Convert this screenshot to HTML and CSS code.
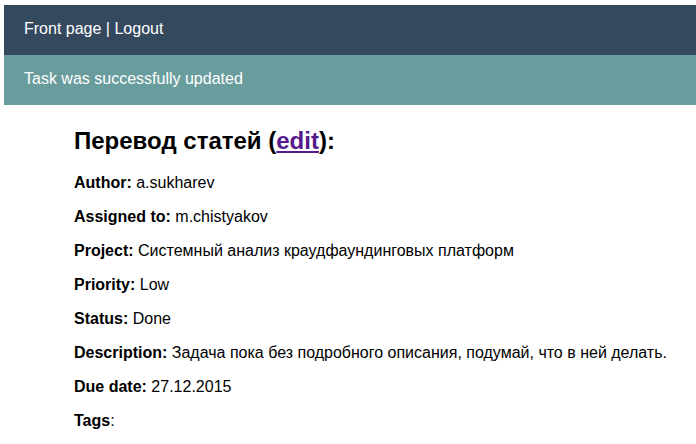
FILE: index.html
```html
<!DOCTYPE html>
<html>
<head>
<meta charset="utf-8">
<link rel="stylesheet" href="styles.css">
</head>
<body>
<div class="page">
  <div class="topbar"><a class="nav" href="#">Front page</a> | <a class="nav" href="#">Logout</a></div>
  <div class="flash">Task was successfully updated</div>
  <div class="content">
    <h2 class="title">Перевод статей (<a class="edit" href="#">edit</a>):</h2>
    <p class="row"><b>Author:</b> a.sukharev</p>
    <p class="row"><b>Assigned to:</b> m.chistyakov</p>
    <p class="row"><b>Project:</b> Системный анализ краудфаундинговых платформ</p>
    <p class="row"><b>Priority:</b> Low</p>
    <p class="row"><b>Status:</b> Done</p>
    <p class="row"><b>Description:</b> Задача пока без подробного описания, подумай, что в ней делать.</p>
    <p class="row"><b>Due date:</b> 27.12.2015</p>
    <p class="row"><b>Tags</b>:</p>
  </div>
</div>
</body>
</html>
```
FILE: styles.css
```css
html, body {
  margin: 0;
  padding: 0;
  background: #fff;
}
body {
  font-family: "Liberation Sans", Arial, sans-serif;
  color: #000;
}
.page {
  padding: 5px 0 0 4px;
}
.topbar {
  background: #34495e;
  color: #fff;
  font-size: 16px;
  height: 50px;
  box-sizing: border-box;
  padding: 15px 20px 0;
}
.nav {
  color: #fff;
  text-decoration: none;
}
.flash {
  background: #699c9d;
  color: #fff;
  font-size: 16px;
  height: 50px;
  box-sizing: border-box;
  padding: 15px 20px 0;
}
.content {
  padding-left: 70px;
}
.title {
  font-size: 24px;
  line-height: 28px;
  margin: 22px 0 19px;
}
.edit {
  color: #551a8b;
}
.row {
  font-size: 16px;
  margin: 0 0 16px;
  line-height: 18px;
}
```
